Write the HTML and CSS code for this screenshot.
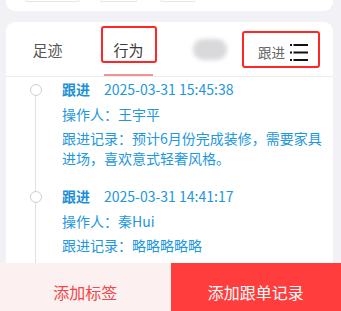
FILE: index.html
```html
<!DOCTYPE html>
<html lang="zh-CN">
<head>
  <meta charset="UTF-8" />
  <title>跟进记录</title>
  <link rel="stylesheet" href="styles.css">
</head>
<body>

<div class="page">
  <!-- top card (cut off) -->
  <div class="top-card">
    <span class="pill pill-a"></span>
    <span class="pill pill-b"></span>
    <span class="pill pill-c"></span>
  </div>

  <!-- main card -->
  <div class="main-card">
    <div class="tabs">
      <div class="tab">足迹</div>
      <div class="tab active">行为</div>
      <div class="tab"><span class="blurred"></span></div>
      <div class="tab tab-follow">
        <span>跟进</span>
        <svg class="menu-icon" width="18" height="17" viewBox="0 0 18 17">
          <rect x="0" y="0" width="2" height="2" fill="#111"/>
          <rect x="0" y="7.5" width="2" height="2" fill="#111"/>
          <rect x="0" y="15" width="2" height="2" fill="#111"/>
          <rect x="3.5" y="0" width="14.5" height="2" fill="#111"/>
          <rect x="3.5" y="7.5" width="14.5" height="2" fill="#111"/>
          <rect x="3.5" y="15" width="14.5" height="2" fill="#111"/>
        </svg>
      </div>
      <div class="mark mark-tab"></div>
      <div class="mark mark-follow"></div>
    </div>

    <div class="timeline">
      <div class="item">
        <div class="axis"><span class="dot"></span></div>
        <div class="content">
          <div class="title"><b>跟进</b><span>2025-03-31 15:45:38</span></div>
          <div class="row">操作人：王宇平</div>
          <div class="row">跟进记录：预计6月份完成装修，需要家具进场，喜欢意式轻奢风格。</div>
        </div>
      </div>
      <div class="item">
        <div class="axis"><span class="dot"></span></div>
        <div class="content">
          <div class="title"><b>跟进</b><span>2025-03-31 14:41:17</span></div>
          <div class="row">操作人：秦Hui</div>
          <div class="row">跟进记录：略略略略略</div>
        </div>
      </div>
    </div>
  </div>

  <div class="footer">
    <div class="btn btn-light">添加标签</div>
    <div class="btn btn-red">添加跟单记录</div>
  </div>
</div>

</body>
</html>
```

FILE: styles.css
```css
* { box-sizing: border-box; }
body {
  margin: 0;
  background: #f2f2f6;
  font-family: "Noto Sans CJK SC", "Noto Sans", sans-serif;
  overflow: hidden;
}

.page {
  height: 311px;
  display: flex;
  flex-direction: column;
}

/* top card */
.top-card {
  flex: none;
  height: 11px;
  margin: 0 8px 0 6px;
  background: #fff;
  border-radius: 0 0 9px 9px;
  position: relative;
}
.pill {
  position: absolute;
  top: 0;
  height: 2px;
  border: 1px solid #e6e6ea;
  border-top: none;
  border-radius: 0 0 8px 8px;
}
.pill-a { left: 19px; width: 55px; }
.pill-b { left: 94px; width: 37px; }
.pill-c { left: 154px; width: 35px; }

/* main card */
.main-card {
  flex: 1;
  margin: 11px 8px 0 6px;
  background: #fff;
  border-radius: 9px 9px 0 0;
  overflow: hidden;
  display: flex;
  flex-direction: column;
}

.tabs {
  position: relative;
  flex: none;
  height: 55px;
  display: flex;
  padding-left: 1px;
  border-bottom: 1px solid #ececec;
}
.tab {
  width: 81px;
  display: flex;
  justify-content: center;
  align-items: center;
  font-size: 15px;
  color: #555;
  position: relative;
}
.tab.active { color: #3a3a3a; }
.tab.active:after {
  content: "";
  position: absolute;
  left: 16px;
  right: 16px;
  bottom: 0;
  height: 2px;
  background: #f29393;
}
.blurred {
  width: 34px;
  height: 21px;
  border-radius: 10px;
  background: #d9d9dc;
  filter: blur(2px);
}
.tab-follow {
  justify-content: flex-start;
  padding: 6px 0 0 8px;
  font-size: 13.5px;
  color: #666;
  gap: 5px;
}
.menu-icon { display: block; }

/* annotation boxes */
.mark {
  position: absolute;
  border: 2px solid #ff2626;
  border-radius: 3px;
}
.mark-tab { left: 95px; top: 4px; width: 56px; height: 37px; }
.mark-follow { left: 236px; top: 9px; width: 78px; height: 37px; }

/* timeline */
.timeline {
  flex: 1;
  padding-top: 2px;
  background: linear-gradient(#e2e2e2, #e2e2e2) no-repeat 29px 14px / 1px 100%;
}
.item {
  display: flex;
  margin-bottom: 18px;
}
.axis {
  width: 56px;
  flex: none;
  padding: 5px 0 0 24px;
}
.dot {
  display: block;
  width: 12px;
  height: 12px;
  border: 1px solid #cfcfcf;
  border-radius: 50%;
  background: #fff;
}
.content {
  flex: 1;
  padding-right: 6px;
  font-size: 14px;
  line-height: 20px;
  color: #2297dd;
}
.title b {
  font-weight: bold;
  color: #1d8fd6;
  margin-right: 14px;
}
.row { margin-top: 4.5px; }

/* footer */
.footer {
  flex: none;
  height: 48px;
  display: flex;
}
.btn {
  flex: 1;
  text-align: center;
  font-size: 16px;
  padding-top: 10px;
  line-height: 38px;
}
.btn-light {
  background: #fdf0f0;
  color: #f04848;
}
.btn-red {
  background: #ff3d3d;
  color: #fff;
}
```
